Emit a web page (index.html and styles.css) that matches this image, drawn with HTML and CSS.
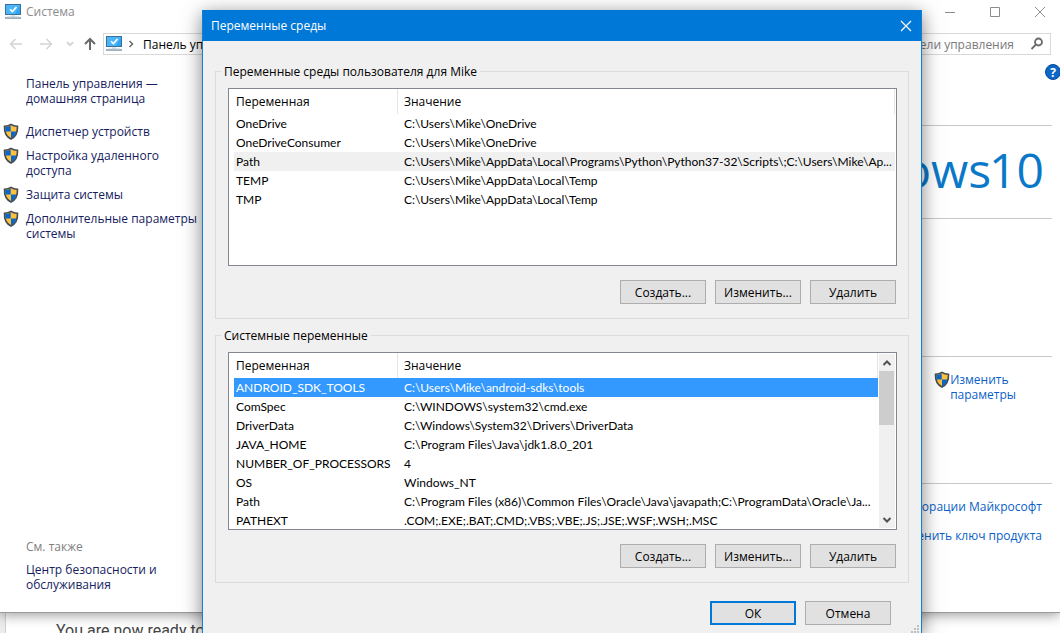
FILE: index.html
```html
<!DOCTYPE html>
<html lang="ru">
<head>
<meta charset="utf-8">
<title>Система</title>
<link rel="stylesheet" href="styles.css">
</head>
<body>
<svg class="defs" aria-hidden="true">
  <symbol id="shield" viewBox="0 0 16 18">
    <path d="M8 1.400C6.200 2.800 3.700 3.200 1.500 3.200C1.200 9.500 3 13.500 8 16C13 13.500 14.800 9.500 14.500 3.200C12.300 3.200 9.800 2.800 8 1.400Z" fill="#ffc13b" stroke="#444b52" stroke-width="1.600"/>
    <path d="M7.700 2.500C6 3.600 4.200 4 2.300 4C2.200 6 2.400 7.500 2.800 8.500H7.700Z" fill="#0a66c8"/>
    <path d="M8 8.500H13.400C12.500 12 11 13.800 8 15.200Z" fill="#0a66c8"/>
  </symbol>
  <symbol id="monitor" viewBox="0 0 16 16">
    <rect x="0.500" y="0.500" width="15" height="10" fill="#2ea3f2" stroke="#3a6f99"/>
    <path d="M1 1H15L10 10H1Z" fill="#4ab6f8"/>
    <path d="M5 5.200L7.400 7.600L11.500 3" fill="none" stroke="#fff" stroke-width="1.600"/>
    <path d="M6 11.500H10V13H6Z" fill="#b9c8d4"/>
    <path d="M0 14H16" stroke="#7f96a8" stroke-width="1.500"/>
    <path d="M2 12.800H14" stroke="#d3dde5" stroke-width="1"/>
  </symbol>
</svg>

<div class="desktop">
  <article class="page"><p>You are now ready to</p></article>

  <section class="system" aria-label="Система">
    <header class="caption">
      <svg class="icon16"><use href="#monitor"/></svg>
      <h1>Система</h1>
      <div class="caption-buttons">
        <button aria-label="Свернуть"><svg viewBox="0 0 12 12"><path d="M1 6.500H11"/></svg></button>
        <button aria-label="Развернуть"><svg viewBox="0 0 12 12"><path d="M1.500 1.500H10.500V10.500H1.500Z"/></svg></button>
        <button aria-label="Закрыть"><svg viewBox="0 0 12 12"><path d="M1 1L11 11M11 1L1 11"/></svg></button>
      </div>
    </header>

    <nav class="toolbar" aria-label="Навигация">
      <div class="nav-buttons">
        <button aria-label="Назад" disabled><svg class="arrow" viewBox="0 0 14 14"><path d="M13 7H2M6.500 2L1.500 7L6.500 12"/></svg></button>
        <button aria-label="Вперед" disabled><svg class="arrow" viewBox="0 0 14 14"><path d="M1 7H12M7.500 2L12.500 7L7.500 12"/></svg></button>
        <button class="recent" aria-label="Последние расположения" disabled><svg class="chevron" viewBox="0 0 8 8"><path d="M1.500 2.500L4 5L6.500 2.500"/></svg></button>
        <button class="level-up" aria-label="Вверх"><svg class="arrow up" viewBox="0 0 14 14"><path d="M7 13V2M2 7L7 2L12 7"/></svg></button>
      </div>
      <div class="address">
        <svg class="icon16"><use href="#monitor"/></svg>
        <svg class="crumb" viewBox="0 0 8 8"><path d="M2.500 1L5.500 4L2.500 7"/></svg>
        <span>Панель управления</span>
      </div>
      <div class="search">
        <input type="text" aria-label="Поиск" placeholder="Поиск в панели управления">
        <svg viewBox="0 0 14 14"><circle cx="8.500" cy="5" r="3.500"/><path d="M6 7.500L1.500 12"/></svg>
      </div>
    </nav>

    <div class="content">
      <aside class="sidebar">
        <a class="home" href="#">Панель управления —<br>домашняя страница</a>
        <ul class="tasks">
          <li><svg class="shield"><use href="#shield"/></svg><a href="#">Диспетчер устройств</a></li>
          <li><svg class="shield"><use href="#shield"/></svg><a href="#">Настройка удаленного<br>доступа</a></li>
          <li><svg class="shield"><use href="#shield"/></svg><a href="#">Защита системы</a></li>
          <li><svg class="shield"><use href="#shield"/></svg><a href="#">Дополнительные параметры<br>системы</a></li>
        </ul>
        <div class="see-also">
          <h2>См. также</h2>
          <a href="#">Центр безопасности и<br>обслуживания</a>
        </div>
      </aside>
      <main class="main">
        <div class="help-row"><button class="help" aria-label="Справка">?</button></div>
        <div class="brand"><span>Windows</span><span class="version">10</span></div>
        <div class="specs"></div>
        <div class="names">
          <svg class="shield"><use href="#shield"/></svg><a href="#">Изменить<br>параметры</a>
        </div>
        <div class="license">
          <a href="#">Условия лицензии корпорации Майкрософт</a>
          <a href="#">Изменить ключ продукта</a>
        </div>
      </main>
    </div>
  </section>

  <section class="dialog" role="dialog" aria-labelledby="dialog-title">
    <header class="dialog-caption">
      <h2 id="dialog-title">Переменные среды</h2>
      <button aria-label="Закрыть"><svg viewBox="0 0 12 12"><path d="M1 1L11 11M11 1L1 11"/></svg></button>
    </header>
    <div class="dialog-body">
      <fieldset>
        <legend>Переменные среды пользователя для Mike</legend>
        <div class="listbox">
          <table>
            <thead><tr><th class="name">Переменная</th><th>Значение</th></tr></thead>
            <tbody>
              <tr><td>OneDrive</td><td>C:\Users\Mike\OneDrive</td></tr>
              <tr><td>OneDriveConsumer</td><td>C:\Users\Mike\OneDrive</td></tr>
              <tr class="current"><td>Path</td><td>C:\Users\Mike\AppData\Local\Programs\Python\Python37-32\Scripts\;C:\Users\Mike\Ap...</td></tr>
              <tr><td>TEMP</td><td>C:\Users\Mike\AppData\Local\Temp</td></tr>
              <tr><td>TMP</td><td>C:\Users\Mike\AppData\Local\Temp</td></tr>
            </tbody>
          </table>
        </div>
        <div class="actions">
          <button class="btn">Создать...</button>
          <button class="btn">Изменить...</button>
          <button class="btn">Удалить</button>
        </div>
      </fieldset>

      <fieldset>
        <legend>Системные переменные</legend>
        <div class="listbox">
          <table>
            <thead><tr><th class="name">Переменная</th><th>Значение</th></tr></thead>
            <tbody>
              <tr class="selected"><td>ANDROID_SDK_TOOLS</td><td>C:\Users\Mike\android-sdks\tools</td></tr>
              <tr><td>ComSpec</td><td>C:\WINDOWS\system32\cmd.exe</td></tr>
              <tr><td>DriverData</td><td>C:\Windows\System32\Drivers\DriverData</td></tr>
              <tr><td>JAVA_HOME</td><td>C:\Program Files\Java\jdk1.8.0_201</td></tr>
              <tr><td>NUMBER_OF_PROCESSORS</td><td>4</td></tr>
              <tr><td>OS</td><td>Windows_NT</td></tr>
              <tr><td>Path</td><td>C:\Program Files (x86)\Common Files\Oracle\Java\javapath;C:\ProgramData\Oracle\Ja...</td></tr>
              <tr><td>PATHEXT</td><td>.COM;.EXE;.BAT;.CMD;.VBS;.VBE;.JS;.JSE;.WSF;.WSH;.MSC</td></tr>
            </tbody>
          </table>
          <div class="scrollbar">
            <button aria-label="Прокрутить вверх"><svg viewBox="0 0 10 8"><path d="M1.500 6L5 2.500L8.500 6"/></svg></button>
            <div class="thumb"></div>
            <button class="down" aria-label="Прокрутить вниз"><svg viewBox="0 0 10 8"><path d="M1.500 2L5 5.500L8.500 2"/></svg></button>
          </div>
        </div>
        <div class="actions">
          <button class="btn">Создать...</button>
          <button class="btn">Изменить...</button>
          <button class="btn">Удалить</button>
        </div>
      </fieldset>

      <footer>
        <button class="btn default">ОК</button>
        <button class="btn">Отмена</button>
      </footer>
    </div>
    <svg class="grip" viewBox="0 0 9 9"><path d="M6 0H8V2H6ZM3 3H5V5H3ZM6 3H8V5H6ZM0 6H2V8H0ZM3 6H5V8H3ZM6 6H8V8H6Z"/></svg>
  </section>
</div>
</body>
</html>
```
FILE: styles.css
```css
* { box-sizing: border-box; }
body {
  margin: 0;
  font: 12px/15px "Open Sans", "Noto Sans", sans-serif;
  color: #000;
}
h1, h2, p, ul { margin: 0; padding: 0; font-size: 12px; font-weight: 400; }
ul { list-style: none; }
a { color: #0a5fc8; text-decoration: none; }
button, input { font: inherit; color: inherit; }
button { border: 0; padding: 0; background: none; display: flex; align-items: center; justify-content: center; }
svg { display: block; flex: none; }
.defs { display: none; }
.icon16 { width: 16px; height: 16px; }
.shield { width: 16px; height: 18px; margin-top: -1px; }

.desktop {
  position: relative;
  height: 100vh;
  overflow: hidden;
  background: #ececec;
  display: flex;
  flex-direction: column;
}

/* Document lying under both windows */
.page {
  position: absolute;
  inset: 0 0 0 5px;
  background: #fff;
  border-left: 1px solid #d0d0d0;
  display: flex;
  align-items: flex-end;
  padding-left: 50px;
}
.page p { font: 16px/20px Roboto, sans-serif; color: #444; margin-bottom: -8px; }

/* System window */
.system {
  position: relative;
  flex: 1;
  margin-bottom: 20px;
  background: #fff;
  border-bottom: 1px solid #9a9a9a;
  box-shadow: 0 2px 12px rgba(0, 0, 0, .4);
  display: flex;
  flex-direction: column;
}
.caption { display: flex; align-items: center; gap: 5px; height: 23px; padding-left: 5px; }
.caption h1 { color: #8c8c8c; }
.caption-buttons { margin-left: auto; display: flex; padding-right: 14px; gap: 33px; }
.caption-buttons svg { width: 12px; height: 12px; stroke: #8c8c8c; fill: none; }

.toolbar { display: flex; height: 22px; margin: 10px 9px 0; }
.nav-buttons { display: flex; align-items: center; width: 94px; gap: 16px; }
.nav-buttons .recent { margin-left: -4px; }
.nav-buttons .level-up { margin-left: -8px; }
.arrow { width: 14px; height: 14px; fill: none; stroke: #d4d4d4; stroke-width: 1.5; }
.arrow.up { stroke: #6a6a6a; stroke-width: 2; }
.chevron { width: 10px; height: 10px; fill: none; stroke: #d4d4d4; stroke-width: 1.5; }
.address { flex: 1; display: flex; align-items: center; border: 1px solid #d9d9d9; padding-left: 2px; }
.crumb { width: 8px; height: 8px; fill: none; stroke: #6a6a6a; stroke-width: 1.5; margin: 0 8px 0 5px; }
.search { width: 222px; margin-left: 8px; display: flex; align-items: center; border: 1px solid #d9d9d9; padding-right: 6px; gap: 16px; }
.search input { flex: 1; min-width: 0; border: 0; padding: 0; outline: 0; text-align: right; background: none; }
.search input::placeholder { color: #7a7a7a; opacity: 1; }
.search svg { width: 14px; height: 14px; fill: none; stroke: #6a6a6a; stroke-width: 1.8; }

.content { flex: 1; display: flex; min-height: 0; }
.sidebar { width: 202px; padding: 21px 0 20px 3px; display: flex; flex-direction: column; white-space: nowrap; }
.sidebar a { color: #151c60; }
.home { padding-left: 23px; }
.tasks { display: flex; flex-direction: column; gap: 9px; margin-top: 18px; }
.tasks li { display: flex; align-items: flex-start; gap: 7px; }
.tasks .shield { margin-bottom: -3px; }
.see-also { margin-top: auto; padding-left: 23px; display: flex; flex-direction: column; gap: 8px; }
.see-also h2 { color: #808080; }

.main { flex: 1; min-width: 0; padding-right: 8px; white-space: nowrap; }
.help-row { height: 70px; padding-top: 9px; margin-right: -9px; display: flex; justify-content: flex-end; align-items: flex-start; }
.help { width: 16px; height: 16px; border-radius: 50%; border: 1px solid #0a4a94; background: #0a66c8; color: #fff; font-weight: 700; }
.brand {
  height: 93px;
  border-top: 1px solid #c8c8c8;
  display: flex;
  align-items: baseline;
  justify-content: flex-end;
  padding: 20px 8px 0 0;
  font-size: 48px;
  line-height: 48px;
  color: #0a78c8;
}
.version { margin-left: -2px; }
.specs { height: 138px; border-top: 1px solid #c8c8c8; }
.names { height: 127px; border-top: 1px solid #c8c8c8; display: flex; justify-content: flex-end; padding: 15px 36px 0 0; }
.license { border-top: 1px solid #c8c8c8; display: flex; flex-direction: column; align-items: flex-end; gap: 14px; padding: 15px 10px 0 0; }

/* Environment variables dialog */
.dialog {
  position: absolute;
  top: 10px;
  left: 202px;
  right: 138px;
  background: #f0f0f0;
  border: 1px solid #1080d8;
  border-top: 0;
  box-shadow: 0 4px 18px rgba(0, 0, 0, .5);
}
.dialog-caption {
  height: 31px;
  background: #0078d7;
  color: #fff;
  display: flex;
  align-items: center;
  justify-content: space-between;
  padding: 0 9px 0 8px;
}
.dialog-caption svg { width: 12px; height: 12px; stroke: #fff; fill: none; stroke-width: 1.2; }
.dialog-body { padding: 23px 12px 9px; }
fieldset { margin: 0 0 9px; border: 1px solid #dcdcdc; padding: 9px 11px 14px 12px; min-width: 0; }
legend { line-height: 15px; padding: 0 3px; margin-left: -7px; }
.listbox { height: 178px; background: #fff; border: 1px solid #828790; display: flex; padding-left: 5px; overflow: hidden; padding-right: 1px; }
table { flex: 1; width: 100%; min-width: 0; align-self: flex-start; table-layout: fixed; border-collapse: separate; border-spacing: 0; }
th, td { padding: 0 0 0 2px; text-align: left; font-weight: 400; white-space: nowrap; line-height: 19px; }
th { height: 25px; border-right: 1px solid #e5e5e5; }
td + td, th + th { padding-left: 6px; }
td { height: 19px; font-family: Lato, "Open Sans", sans-serif; }
.name { width: 164px; }
.current { background: #f0f0f0; }
.selected { background: #3399ff; color: #fff; }
.scrollbar { width: 17px; flex: none; border-left: 1px solid #fff; background: #f0f0f0; display: flex; flex-direction: column; margin: 1px 0; }
.scrollbar button { height: 17px; }
.scrollbar svg { width: 10px; height: 8px; stroke: #505050; stroke-width: 2; fill: none; }
.thumb { height: 54px; background: #cdcdcd; margin-right: 1px; }
.scrollbar .down { margin-top: auto; }
.actions { display: flex; justify-content: flex-end; gap: 9px; margin-top: 14px; padding-right: 1px; }
.btn { width: 86px; height: 24px; background: #e1e1e1; border: 1px solid #adadad; }
.btn.default { border: 2px solid #0078d7; }
footer { display: flex; justify-content: flex-end; gap: 9px; margin-top: 18px; padding-right: 18px; }
.grip { position: absolute; right: 1px; bottom: 0; width: 9px; height: 9px; fill: #bfbfbf; }
```
